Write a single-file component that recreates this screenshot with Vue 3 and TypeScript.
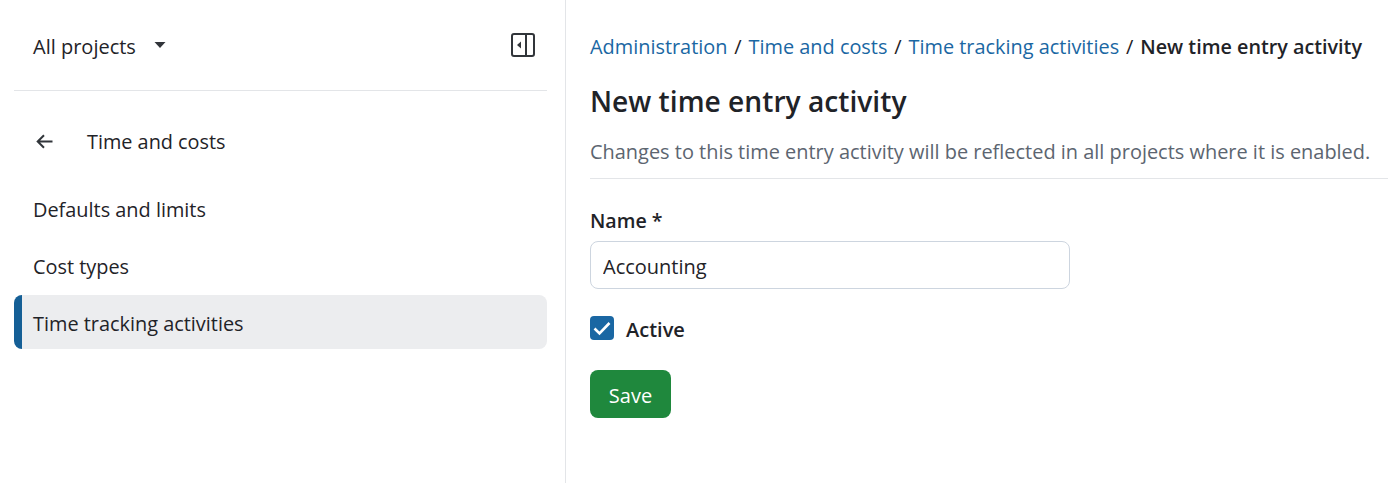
<script setup lang="ts">
const crumbs: string[] = ['Administration', 'Time and costs', 'Time tracking activities']
const items: { label: string; active?: boolean }[] = [
  { label: 'Defaults and limits' },
  { label: 'Cost types' },
  { label: 'Time tracking activities', active: true },
]
</script>

<template>
  <div class="page">
    <aside class="sidebar">
      <div class="top">
        <div class="projects">
          <span class="projects-name">All projects</span>
          <svg class="caret" width="12" height="6" viewBox="0 0 12 6"><path d="M0.5 0h11L6 6z" fill="#31353a" /></svg>
        </div>
        <svg class="toggle" width="24" height="24" viewBox="0 0 24 24" fill="none">
          <rect x="1" y="1" width="22" height="22" rx="2" stroke="#31353a" stroke-width="2" />
          <path d="M15 1v22" stroke="#31353a" stroke-width="2" />
          <path d="M10 8.5v7L6 12z" fill="#31353a" />
        </svg>
      </div>
      <div class="back">
        <svg class="arrow" width="17" height="15" viewBox="0 0 17 15" fill="none">
          <path d="M16.5 7.5H2M8 1.2L1.7 7.5l6.3 6.3" stroke="#31353a" stroke-width="2" />
        </svg>
        <span>Time and costs</span>
      </div>
      <nav class="menu">
        <div v-for="i in items" :key="i.label" class="item" :class="{ active: i.active }">{{ i.label }}</div>
      </nav>
    </aside>
    <main class="content">
      <div class="crumbs">
        <template v-for="c in crumbs" :key="c">
          <a class="crumb">{{ c }}</a>
          <span class="sep">/</span>
        </template>
        <strong class="current">New time entry activity</strong>
      </div>
      <h1 class="title">New time entry activity</h1>
      <p class="desc">Changes to this time entry activity will be reflected in all projects where it is enabled.</p>
      <form class="form" @submit.prevent>
        <label class="label" for="name">Name *</label>
        <input id="name" class="input" type="text" value="Accounting" />
        <div class="check-row">
          <span class="check">
            <svg width="18" height="15" viewBox="0 0 18 15" fill="none"><path d="M1.5 7.5l5 5L16.5 2" stroke="#fff" stroke-width="2.6" /></svg>
          </span>
          <span class="check-label">Active</span>
        </div>
        <button class="save" type="submit">Save</button>
      </form>
    </main>
  </div>
</template>

<style>
html, body { margin: 0; background: #fff; overflow: hidden; }
</style>

<style scoped>
.page {
  display: flex;
  width: 1388px;
  height: 483px;
  overflow: hidden;
  font-family: "Open Sans", "Noto Sans", sans-serif;
  font-size: 20px;
  color: #1f2328;
}
.sidebar {
  width: 566px;
  flex: none;
  box-sizing: border-box;
  border-right: 1px solid #e3e5e8;
  padding: 0 18px 0 14px;
}
.top {
  display: flex;
  align-items: center;
  justify-content: space-between;
  height: 90px;
  padding: 0 12px 0 19px;
  border-bottom: 1px solid #e3e5e8;
}
.projects { display: flex; align-items: center; gap: 18px; }
.projects-name { padding-top: 2px; }
.back {
  display: flex;
  align-items: center;
  height: 28px;
  margin-top: 36px;
  padding-left: 22px;
  font-size: 19.85px;
}
.arrow { margin-right: 34px; }
.menu { margin-top: 26px; display: flex; flex-direction: column; }
.item {
  height: 54px;
  box-sizing: border-box;
  margin-bottom: 3px;
  padding: 2px 0 0 19px;
  display: flex;
  align-items: center;
  border-radius: 8px;
  font-size: 19.9px;
}
.item.active {
  background: #ecedef;
  border-left: 8px solid #155f96;
  padding-left: 11px;
}
.content {
  flex: 1;
  min-width: 0;
  padding: 0 0 0 24px;
}
.crumbs {
  display: flex;
  align-items: center;
  height: 28px;
  margin-top: 32px;
  white-space: nowrap;
}
.crumb { color: #1a67a3; font-size: 19.9px; }
.sep { margin: 0 6.9px; }
.current { font-weight: 600; font-size: 19.75px; }
.title {
  margin: 22px 0 0;
  font-size: 28.2px;
  line-height: 38px;
  font-weight: 600;
}
.desc {
  margin: 18px 0 0;
  line-height: 28px;
  padding-bottom: 12px;
  font-size: 19.95px;
  color: #5c6570;
  border-bottom: 1px solid #e3e5e8;
  white-space: nowrap;
}
.form { display: flex; flex-direction: column; align-items: flex-start; }
.label { margin-top: 28px; line-height: 28px; font-weight: 600; font-size: 19.6px; }
.input {
  margin-top: 6px;
  width: 480px;
  height: 48px;
  box-sizing: border-box;
  border: 1px solid #cdd5df;
  border-radius: 8px;
  padding: 2px 12px 0;
  font: inherit;
  color: inherit;
  outline: none;
}
.check-row { display: flex; align-items: flex-start; gap: 12px; margin-top: 27px; }
.check {
  width: 24px;
  height: 24px;
  border-radius: 4px;
  background: #1a67a3;
  display: flex;
  align-items: center;
  justify-content: center;
}
.check-label { font-weight: 600; line-height: 24px; padding-top: 2px; }
.save {
  margin-top: 28px;
  width: 81px;
  height: 48px;
  border: none;
  border-radius: 8px;
  padding: 2px 0 0;
  background: #1f883d;
  color: #fff;
  font: inherit;
}
</style>
